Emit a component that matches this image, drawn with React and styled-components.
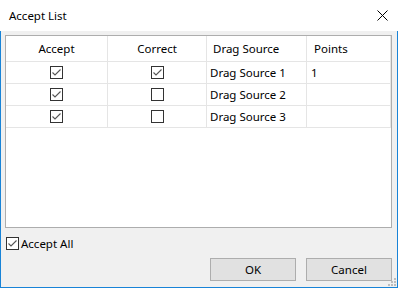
import React from 'react';
import styled, { createGlobalStyle } from 'styled-components';

const GlobalStyle = createGlobalStyle`
  html, body {
    margin: 0;
    padding: 0;
    background: #ffffff;
  }
  body {
    font-family: 'Noto Sans', 'Open Sans', sans-serif;
    font-size: 11.5px;
    color: #000;
  }
`;

const Window = styled.div`
  width: 398px;
  height: 288px;
  display: flex;
  flex-direction: column;
  position: relative;
  overflow: hidden;
`;

const TitleBar = styled.div`
  height: 31px;
  background: #fff;
  display: flex;
  align-items: center;
  justify-content: space-between;
  padding: 0 10px 0 9px;
  box-sizing: border-box;
`;

const Title = styled.div`
  font-size: 11.5px;
  margin-top: -1px;
`;

const CloseButton = styled.div`
  width: 11px;
  height: 11px;
  display: flex;
  margin-top: -1px;
`;

const Body = styled.div`
  flex: 1;
  background: #f0f0f0;
  border: 1px solid #1883d7;
  border-top: none;
  padding: 4px 5px 6px 4px;
  display: flex;
  flex-direction: column;
`;

const ListBox = styled.div`
  height: 193px;
  box-sizing: border-box;
  border: 1px solid #adadad;
  background: #fff;
  display: grid;
  grid-template-columns: 102px 99px 100px 84px;
  grid-auto-rows: 22px;
  grid-template-rows: 26px;
  align-content: start;
`;

const Cell = styled.div`
  box-sizing: border-box;
  border-right: 1px solid #e5e5e5;
  border-bottom: 1px solid #e5e5e5;
  display: flex;
  align-items: center;
  justify-content: ${p => (p.center ? 'center' : 'flex-start')};
  padding-left: ${p => (p.center ? 0 : p.pad)}px;
  padding-bottom: 1px;
  white-space: nowrap;
`;

const Footer = styled.div`
  margin-top: 9px;
  height: 13px;
  display: flex;
  align-items: center;
  gap: 2px;
  padding-left: 1px;
`;

const Label = styled.span`
  line-height: 13px;
`;

const Buttons = styled.div`
  margin-top: 8px;
  display: flex;
  justify-content: flex-end;
  gap: 10px;
`;

const Button = styled.div`
  width: 86px;
  height: 23px;
  box-sizing: border-box;
  background: #e1e1e1;
  border: 1px solid #adadad;
  display: flex;
  align-items: center;
  justify-content: center;
  padding-bottom: 1px;
`;

const Grip = styled.svg`
  position: absolute;
  right: 2px;
  bottom: 2px;
`;

const CheckBox = ({ checked }) => (
  <svg width="13" height="13" viewBox="0 0 13 13">
    <rect x="0.5" y="0.5" width="12" height="12" fill="#fff" stroke="#333" />
    {checked && (
      <path d="M2.5 6.5 L5 9 L10.5 3.5" fill="none" stroke="#555" strokeWidth="1.1" />
    )}
  </svg>
);

const rows = [
  { accept: true, correct: true, source: 'Drag Source 1', points: '1' },
  { accept: true, correct: false, source: 'Drag Source 2', points: '' },
  { accept: true, correct: false, source: 'Drag Source 3', points: '' },
];

export default function App() {
  return (
    <>
      <GlobalStyle />
      <Window>
        <TitleBar>
          <Title>Accept List</Title>
          <CloseButton>
            <svg width="11" height="11" viewBox="0 0 11 11">
              <path d="M0.5 0.5 L10.5 10.5 M10.5 0.5 L0.5 10.5" stroke="#000" strokeWidth="1" />
            </svg>
          </CloseButton>
        </TitleBar>
        <Body>
          <ListBox>
            <Cell center>Accept</Cell>
            <Cell center>Correct</Cell>
            <Cell pad={6}>Drag Source</Cell>
            <Cell pad={7}>Points</Cell>
            {rows.map(r => (
              <React.Fragment key={r.source}>
                <Cell center><CheckBox checked={r.accept} /></Cell>
                <Cell center><CheckBox checked={r.correct} /></Cell>
                <Cell pad={3}>{r.source}</Cell>
                <Cell pad={4}>{r.points}</Cell>
              </React.Fragment>
            ))}
          </ListBox>
          <Footer>
            <CheckBox checked />
            <Label>Accept All</Label>
          </Footer>
          <Buttons>
            <Button>OK</Button>
            <Button>Cancel</Button>
          </Buttons>
        </Body>
        <Grip width="8" height="8" viewBox="0 0 8 8">
          <rect x="6" y="0" width="2" height="2" fill="#bdbdbd" />
          <rect x="3" y="3" width="2" height="2" fill="#bdbdbd" />
          <rect x="6" y="3" width="2" height="2" fill="#bdbdbd" />
          <rect x="0" y="6" width="2" height="2" fill="#bdbdbd" />
          <rect x="3" y="6" width="2" height="2" fill="#bdbdbd" />
          <rect x="6" y="6" width="2" height="2" fill="#bdbdbd" />
        </Grip>
      </Window>
    </>
  );
}
